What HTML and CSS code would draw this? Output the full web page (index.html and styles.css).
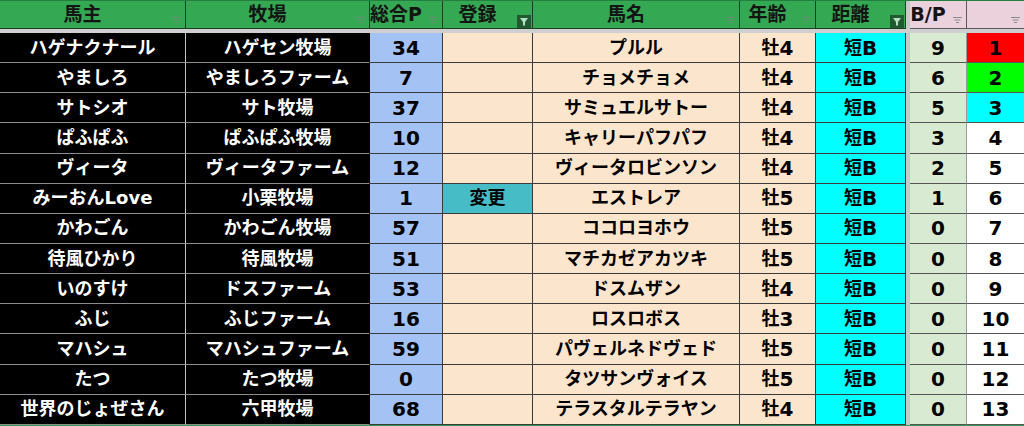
FILE: index.html
```html
<!DOCTYPE html>
<html lang="ja">
<head>
<meta charset="utf-8">
<title>馬主一覧</title>
<link rel="stylesheet" href="styles.css">
</head>
<body>
<div class="sheet">
  <div class="sep"></div>
  <div class="band"></div>

  <div class="hd hd-green"><span class="ht">馬主</span><span class="fi"><svg width="9" height="7" viewBox="0 0 9 7"><path d="M0 0.5H9M1.5 3H7.5M3 5.5H6" stroke="#6d8f77" stroke-width="1"/></svg></span></div>
  <div class="hd hd-green"><span class="ht">牧場</span><span class="fi"><svg width="9" height="7" viewBox="0 0 9 7"><path d="M0 0.5H9M1.5 3H7.5M3 5.5H6" stroke="#6d8f77" stroke-width="1"/></svg></span></div>
  <div class="hd hd-green"><span class="ht">総合P</span><span class="fi"><svg width="9" height="7" viewBox="0 0 9 7"><path d="M0 0.5H9M1.5 3H7.5M3 5.5H6" stroke="#6d8f77" stroke-width="1"/></svg></span></div>
  <div class="hd hd-green"><span class="ht">登録</span><span class="fa"><svg width="14" height="13" viewBox="0 0 14 13"><rect width="14" height="13" fill="#1f5a31"/><path d="M3 3H11L8 7V10.5H6V7Z" fill="#b9e0c2"/></svg></span></div>
  <div class="hd hd-green"><span class="ht">馬名</span><span class="fi"><svg width="9" height="7" viewBox="0 0 9 7"><path d="M0 0.5H9M1.5 3H7.5M3 5.5H6" stroke="#6d8f77" stroke-width="1"/></svg></span></div>
  <div class="hd hd-green"><span class="ht">年齢</span><span class="fi"><svg width="9" height="7" viewBox="0 0 9 7"><path d="M0 0.5H9M1.5 3H7.5M3 5.5H6" stroke="#6d8f77" stroke-width="1"/></svg></span></div>
  <div class="hd hd-green"><span class="ht">距離</span><span class="fa"><svg width="14" height="13" viewBox="0 0 14 13"><rect width="14" height="13" fill="#1f5a31"/><path d="M3 3H11L8 7V10.5H6V7Z" fill="#b9e0c2"/></svg></span></div>
  <div class="hd hd-pink"><span class="ht">B/P</span><span class="fi"><svg width="9" height="7" viewBox="0 0 9 7"><path d="M0 0.5H9M1.5 3H7.5M3 5.5H6" stroke="#8a8a8a" stroke-width="1"/></svg></span></div>
  <div class="hd hd-pink hd-last"><span class="ht"></span><span class="fi"><svg width="9" height="7" viewBox="0 0 9 7"><path d="M0 0.5H9M1.5 3H7.5M3 5.5H6" stroke="#8a8a8a" stroke-width="1"/></svg></span></div>

  <div class="c owner">ハゲナクナール</div><div class="c farm">ハゲセン牧場</div><div class="c pt">34</div><div class="c reg"></div><div class="c name">プルル</div><div class="c age">牡<span class="n">4</span></div><div class="c dist">短<span class="n">B</span></div><div class="c bp">9</div><div class="c rank r1">1</div>
  <div class="c owner">やましろ</div><div class="c farm">やましろファーム</div><div class="c pt">7</div><div class="c reg"></div><div class="c name">チョメチョメ</div><div class="c age">牡<span class="n">4</span></div><div class="c dist">短<span class="n">B</span></div><div class="c bp">6</div><div class="c rank r2">2</div>
  <div class="c owner">サトシオ</div><div class="c farm">サト牧場</div><div class="c pt">37</div><div class="c reg"></div><div class="c name">サミュエルサトー</div><div class="c age">牡<span class="n">4</span></div><div class="c dist">短<span class="n">B</span></div><div class="c bp">5</div><div class="c rank r3">3</div>
  <div class="c owner">ぱふぱふ</div><div class="c farm">ぱふぱふ牧場</div><div class="c pt">10</div><div class="c reg"></div><div class="c name">キャリーパフパフ</div><div class="c age">牡<span class="n">4</span></div><div class="c dist">短<span class="n">B</span></div><div class="c bp">3</div><div class="c rank">4</div>
  <div class="c owner">ヴィータ</div><div class="c farm">ヴィータファーム</div><div class="c pt">12</div><div class="c reg"></div><div class="c name">ヴィータロビンソン</div><div class="c age">牡<span class="n">4</span></div><div class="c dist">短<span class="n">B</span></div><div class="c bp">2</div><div class="c rank">5</div>
  <div class="c owner">みーおんLove</div><div class="c farm">小栗牧場</div><div class="c pt">1</div><div class="c reg changed">変更</div><div class="c name">エストレア</div><div class="c age">牡<span class="n">5</span></div><div class="c dist">短<span class="n">B</span></div><div class="c bp">1</div><div class="c rank">6</div>
  <div class="c owner">かわごん</div><div class="c farm">かわごん牧場</div><div class="c pt">57</div><div class="c reg"></div><div class="c name">ココロヨホウ</div><div class="c age">牡<span class="n">5</span></div><div class="c dist">短<span class="n">B</span></div><div class="c bp">0</div><div class="c rank">7</div>
  <div class="c owner">待風ひかり</div><div class="c farm">待風牧場</div><div class="c pt">51</div><div class="c reg"></div><div class="c name">マチカゼアカツキ</div><div class="c age">牡<span class="n">5</span></div><div class="c dist">短<span class="n">B</span></div><div class="c bp">0</div><div class="c rank">8</div>
  <div class="c owner">いのすけ</div><div class="c farm">ドスファーム</div><div class="c pt">53</div><div class="c reg"></div><div class="c name">ドスムザン</div><div class="c age">牡<span class="n">4</span></div><div class="c dist">短<span class="n">B</span></div><div class="c bp">0</div><div class="c rank">9</div>
  <div class="c owner">ふじ</div><div class="c farm">ふじファーム</div><div class="c pt">16</div><div class="c reg"></div><div class="c name">ロスロボス</div><div class="c age">牡<span class="n">3</span></div><div class="c dist">短<span class="n">B</span></div><div class="c bp">0</div><div class="c rank">10</div>
  <div class="c owner">マハシュ</div><div class="c farm">マハシュファーム</div><div class="c pt">59</div><div class="c reg"></div><div class="c name">パヴェルネドヴェド</div><div class="c age">牡<span class="n">5</span></div><div class="c dist">短<span class="n">B</span></div><div class="c bp">0</div><div class="c rank">11</div>
  <div class="c owner">たつ</div><div class="c farm">たつ牧場</div><div class="c pt">0</div><div class="c reg"></div><div class="c name">タツサンヴォイス</div><div class="c age">牡<span class="n">5</span></div><div class="c dist">短<span class="n">B</span></div><div class="c bp">0</div><div class="c rank">12</div>
  <div class="c owner">世界のじょぜさん</div><div class="c farm">六甲牧場</div><div class="c pt">68</div><div class="c reg"></div><div class="c name">テラスタルテラヤン</div><div class="c age">牡<span class="n">4</span></div><div class="c dist">短<span class="n">B</span></div><div class="c bp">0</div><div class="c rank">13</div>
</div>
</body>
</html>
```
FILE: styles.css
```css
* { box-sizing: border-box; }
html, body { margin: 0; padding: 0; background: #ffffff; }
body {
  font-family: "DejaVu Sans", "Noto Sans CJK JP", sans-serif;
  font-weight: bold;
  font-size: 18px;
  color: #000;
}
.sheet {
  width: 1024px;
  display: grid;
  grid-template-columns: 186px 184px 73px 90px 207px 76px 90px 4px 57px 57px;
  grid-template-rows: 28px 4px repeat(13, 30.15px);
  border-top: 1px solid #23803f;
  border-bottom: 2px solid #2f9a4b;
  overflow: hidden;
}
.sep {
  grid-column: 8;
  grid-row: 1 / -1;
  background: #c8c8c8;
}
.band {
  grid-column: 1 / -1;
  grid-row: 2;
  background: #cfcfcf;
}
.hd {
  display: flex;
  align-items: stretch;
  border-right: 1px solid #1d3f27;
  border-bottom: 1px solid #1d3f27;
  overflow: visible;
  min-width: 0;
}
.hd-green { background: #34a853; }
.hd-pink { background: #ead1dc; border-right-color: #5a5a5a; border-bottom-color: #5a5a5a; }
.hd-last { border-right: none; }
.ht {
  flex: 1;
  min-width: 0;
  display: flex;
  align-items: center;
  justify-content: center;
  font-size: 19px;
  color: #141414;
  white-space: nowrap;
  line-height: 1;
}
.fi {
  width: 20px;
  flex: none;
  display: flex;
  justify-content: flex-end;
  align-items: flex-end;
  padding: 0 4px 4px 0;
}
.fi svg { display: block; }
.fa {
  width: 20px;
  flex: none;
  display: flex;
  justify-content: flex-end;
  align-items: flex-end;
  padding: 0 1px 0 0;
}
.fa svg { display: block; }
.c {
  display: flex;
  align-items: center;
  justify-content: center;
  white-space: nowrap;
  line-height: 1;
  border-right: 1px solid #3a3a3a;
  border-bottom: 1px solid #3a3a3a;
  min-width: 0;
}
.n { font-size: 20px; }
.owner { background: #000; color: #fff; border-right-color: #c4c4c4; border-bottom-color: #8c8c8c; }
.farm { background: #000; color: #fff; border-right-color: #000; border-bottom-color: #8c8c8c; }
.pt { background: #a4c2f4; font-size: 20px; }
.reg { background: #fce5cd; }
.changed { background: #46bdc6; }
.name { background: #fce5cd; }
.age { background: #fce5cd; }
.dist { background: #00ffff; border-right-color: #2a2a2a; }
.bp { background: #d9ead3; border-right-color: #9a9a9a; border-bottom-color: #555; font-size: 20px; }
.rank { background: #ffffff; border-right: none; border-bottom-color: #555; font-size: 20px; }
.r1 { background: #ff0000; }
.r2 { background: #00ff00; }
.r3 { background: #00ffff; }
```
